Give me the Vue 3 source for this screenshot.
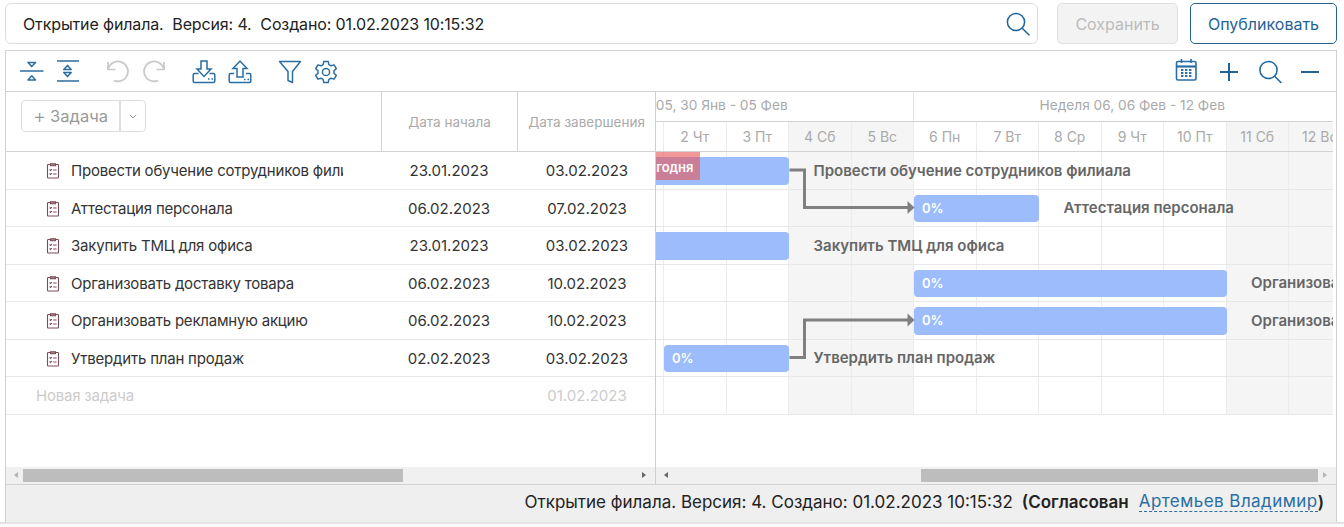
<script setup>
const DAY = 62.5
const tasks = [
  { name: 'Провести обучение сотрудников филиала', start: '23.01.2023', end: '03.02.2023', from: -6, to: 5, pct: '' },
  { name: 'Аттестация персонала', start: '06.02.2023', end: '07.02.2023', from: 7, to: 9, pct: '0%' },
  { name: 'Закупить ТМЦ для офиса', start: '23.01.2023', end: '03.02.2023', from: -6, to: 5, pct: '' },
  { name: 'Организовать доставку товара', start: '06.02.2023', end: '10.02.2023', from: 7, to: 12, pct: '0%' },
  { name: 'Организовать рекламную акцию', start: '06.02.2023', end: '10.02.2023', from: 7, to: 12, pct: '0%' },
  { name: 'Утвердить план продаж', start: '02.02.2023', end: '03.02.2023', from: 3, to: 5, pct: '0%' }
]
const days = [
  ['30 Пн', 0], ['31 Вт', 0], ['1 Ср', 0], ['2 Чт', 0], ['3 Пт', 0], ['4 Сб', 1], ['5 Вс', 1],
  ['6 Пн', 0], ['7 Вт', 0], ['8 Ср', 0], ['9 Чт', 0], ['10 Пт', 0], ['11 Сб', 1], ['12 Вс', 1]
].map(([label, off]) => ({ label, off }))
const weeks = ['Неделя 05, 30 Янв - 05 Фев', 'Неделя 06, 06 Фев - 12 Фев']
const barStyle = t => ({ left: t.from * DAY + 'px', width: (t.to - t.from) * DAY + 'px' })
const labelStyle = t => ({ left: t.to * DAY + 24.5 + 'px' })
</script>

<template>
  <div class="page">
    <div class="top">
      <div class="title-box">
        <span class="title-text">Открытие филала.&nbsp; Версия: 4.&nbsp; Создано: 01.02.2023 10:15:32</span>
        <svg class="top-search" width="24" height="24" viewBox="0 0 24 24" fill="none" stroke="#1f6399" stroke-width="1.5"><circle cx="10" cy="10" r="8.6"/><path d="M16.2 16.2 23.4 23.2"/></svg>
      </div>
      <button class="btn btn-off">Сохранить</button>
      <button class="btn btn-main">Опубликовать</button>
    </div>

    <div class="panel">
      <div class="toolbar">
        <div class="tools">
          <div class="group">
            <svg class="ico" viewBox="0 0 24 24" fill="none" stroke="#2a6ea3" stroke-width="1.5" stroke-linejoin="round"><path d="M0 11H23.5"/><path d="M8 2.4H15.5L11.75 6.6Z"/><path d="M8 20H15.5L11.75 15.8Z"/></svg>
            <svg class="ico" viewBox="0 0 24 24" fill="none" stroke="#2a6ea3" stroke-width="1.5" stroke-linejoin="round"><path d="M1 1H23M1 21H23"/><path d="M7.8 9.6H15.2L11.5 5.4Z"/><path d="M7.8 12.4H15.2L11.5 16.6Z"/></svg>
          </div>
          <div class="group">
            <svg class="ico" viewBox="0 0 24 24" fill="none" stroke="#c9c9c9" stroke-width="1.7"><path d="M2 2V9.5H9.5"/><path d="M2.2 9.2A10 10 0 1 1 8 20.6"/></svg>
            <svg class="ico" viewBox="0 0 24 24" fill="none" stroke="#c9c9c9" stroke-width="1.7"><path d="M22 2V9.5H14.5"/><path d="M21.8 9.2A10 10 0 1 0 16 20.6"/></svg>
          </div>
          <div class="group">
            <svg class="ico" viewBox="0 0 24 24" fill="none" stroke="#2a6ea3" stroke-width="1.5"><path d="M9 1H15V9H19L12 16.5 5 9H9Z"/><path d="M6.5 13.5H2.5Q1.2 13.5 1.2 15V21Q1.2 22.5 2.5 22.5H21.5Q22.8 22.5 22.8 21V15Q22.8 13.5 21.5 13.5H17.5"/><path d="M16 19H17.5M19.5 19H21" stroke-width="1.6"/></svg>
            <svg class="ico" viewBox="0 0 24 24" fill="none" stroke="#2a6ea3" stroke-width="1.5"><path d="M9 17H15V8.5H19L12 1 5 8.5H9Z"/><path d="M6 13.5H2.5Q1.2 13.5 1.2 15V21Q1.2 22.5 2.5 22.5H21.5Q22.8 22.5 22.8 21V15Q22.8 13.5 21.5 13.5H18"/><path d="M16 19.5H17.5M19.5 19.5H21" stroke-width="1.6"/></svg>
          </div>
          <div class="group">
            <svg class="ico" viewBox="0 0 24 24" fill="none" stroke="#2a6ea3" stroke-width="1.5"><path d="M1.5 1.5H22.5L14.5 11.5V22.5L10 20.5V11.5Z" stroke-linejoin="round"/></svg>
            <svg class="ico" viewBox="0 0 24 24" fill="none" stroke="#2a6ea3" stroke-width="1.5" stroke-linejoin="round"><circle cx="12" cy="12" r="3.6"/><path d="M9.8 1.5H14.2L14.9 4.6 17 5.8 20.1 4.9 22.3 8.6 20 10.8V13.2L22.3 15.4 20.1 19.1 17 18.2 14.9 19.4 14.2 22.5H9.8L9.1 19.4 7 18.2 3.9 19.1 1.7 15.4 4 13.2V10.8L1.7 8.6 3.9 4.9 7 5.8 9.1 4.6Z"/></svg>
          </div>
        </div>
        <div class="tools-right">
          <svg class="ico cal" viewBox="0 0 24 24" fill="none" stroke="#2a6ea3" stroke-width="1.6"><g transform="translate(0 -2)"><rect x="2.5" y="3.5" width="19.5" height="18.5" rx="1.5"/><path d="M2.5 8.5H22" stroke-width="2.2"/><path d="M7.5 1V5M17 1V5"/><path d="M7 12H9.4M11 12H13.4M15 12H17.4M7 15H9.4M11 15H13.4M15 15H17.4M7 18H9.4M11 18H13.4M15 18H17.4" stroke-width="1.8"/></g></svg>
          <svg class="ico" viewBox="0 0 24 24" fill="none" stroke="#1f6399" stroke-width="2"><path d="M12 3V21M3 12H21"/></svg>
          <svg class="ico" viewBox="0 0 24 24" fill="none" stroke="#1f6399" stroke-width="1.5"><circle cx="10.5" cy="10" r="8.6"/><path d="M16.7 16.2 23.4 23"/></svg>
          <svg class="ico" viewBox="0 0 24 24" fill="none" stroke="#1f6399" stroke-width="2"><path d="M3 12H21"/></svg>
        </div>
      </div>

      <div class="grid-area">
        <div class="left">
          <div class="l-head">
            <div class="c-name head-name">
              <div class="split">
                <span class="split-main"><span class="plus">+</span> Задача</span>
                <span class="split-caret"><svg width="8" height="5" viewBox="0 0 8 5" fill="none" stroke="#999" stroke-width="1"><path d="M.8.8 4 4 7.2.8"/></svg></span>
              </div>
            </div>
            <div class="c-date h-date bl">Дата начала</div>
            <div class="c-end h-date bl">Дата завершения</div>
          </div>
          <div v-for="t in tasks" :key="t.name" class="l-row">
            <div class="c-name task">
              <svg class="clip" width="14" height="17" viewBox="0 0 14 17" fill="none" stroke="#7c4a5c" stroke-width="1.1"><rect x="1.5" y="2.5" width="11" height="13.5" rx=".8"/><path d="M4.5 3.8V1.8H9.5V3.8Z" fill="#a88a6a"/><path d="M3.6 7.5 4.6 8.5 5.8 7M3.6 11.5 4.6 12.5 5.8 11M7.2 8H10.6M7.2 12H10.6"/></svg>
              <span class="task-name">{{ t.name }}</span>
            </div>
            <div class="c-date">{{ t.start }}</div>
            <div class="c-end">{{ t.end }}</div>
          </div>
          <div class="l-row muted">
            <div class="c-name new-task">Новая задача</div>
            <div class="c-date"></div>
            <div class="c-end">01.02.2023</div>
          </div>
          <div class="spacer"></div>
          <div class="scroll">
            <i class="tri tri-l"></i>
            <span class="thumb thumb-l"></span>
            <i class="tri tri-r push"></i>
          </div>
        </div>

        <div class="right">
          <div class="chart">
            <div class="track">
              <div class="weeks">
                <div v-for="w in weeks" :key="w" class="week">{{ w }}</div>
              </div>
              <div class="days">
                <div v-for="d in days" :key="d.label" class="day" :class="{ off: d.off }">{{ d.label }}</div>
              </div>
              <div class="body">
                <div class="cols">
                  <div v-for="d in days" :key="d.label" class="col" :class="{ off: d.off }"></div>
                </div>
                <div v-for="t in tasks" :key="t.name" class="g-row">
                  <div class="bar" :style="barStyle(t)">{{ t.pct }}</div>
                  <div class="bar-label" :style="labelStyle(t)">{{ t.name }}</div>
                </div>
                <div class="g-row"></div>
                <svg class="links" width="875" height="263" fill="none">
                  <path d="M312.5 18H327.5V55.5H432" stroke="#808080" stroke-width="3"/>
                  <path d="M437.5 55.5 430.5 49V62Z" fill="#808080"/>
                  <path d="M312.5 205.5H327.5V168H432" stroke="#808080" stroke-width="3"/>
                  <path d="M437.5 168 430.5 161.5V174.5Z" fill="#808080"/>
                </svg>
                <div class="today">сегодня</div>
              </div>
            </div>
          </div>
          <div class="spacer white"></div>
          <div class="scroll">
            <i class="tri tri-l dark"></i>
            <span class="thumb thumb-r"></span>
            <i class="tri tri-r push"></i>
          </div>
        </div>
      </div>

      <div class="footer">
        <span>Открытие филала. Версия: 4. Создано: 01.02.2023 10:15:32</span>
        <b class="status">(Согласован</b>
        <a class="user">Артемьев Владимир</a><b>)</b>
      </div>
    </div>
    <div class="baseline"></div>
  </div>
</template>

<style scoped>
.page { width: 1344px; height: 527px; overflow: hidden; box-sizing: border-box; padding-top: 3px; font-family: Inter, "Noto Sans", sans-serif; background: #fff; color: #333; }
.top { display: flex; height: 41px; padding: 0 7px 0 5px; }
.title-box { width: 1033px; box-sizing: border-box; border: 1px solid #ddd; border-radius: 6px; display: flex; align-items: center; justify-content: space-between; padding: 0 7px 0 17px; }
.title-text { font-size: 16px; letter-spacing: -.13px; color: #222; }
.top-search { margin-top: 1px; }
.btn { height: 41px; box-sizing: border-box; border-radius: 5px; font: 16px Inter, sans-serif; padding: 0; }
.btn-off { width: 121px; margin-left: 19px; background: #f3f3f3; border: 1px solid #e0e0e0; color: #bbb; }
.btn-main { width: 147px; margin-left: 12px; background: #fff; border: 1px solid #1f6399; color: #1f6399; }
.panel { margin: 6px 7px 0 5px; border: 1px solid #d2d2d2; border-bottom: 0; }
.toolbar { height: 41px; box-sizing: border-box; border-bottom: 1px solid #d2d2d2; display: flex; justify-content: space-between; align-items: center; padding: 0 14px; }
.tools { display: flex; gap: 26px; margin-top: 2px; }
.group { display: flex; gap: 12px; }
.tools-right { display: flex; gap: 16.5px; margin-top: 2px; }
.cal { margin-right: 2.5px; }
.ico { width: 24px; height: 24px; display: block; overflow: visible; }
.grid-area { display: flex; height: 392px; border-bottom: 1px solid #d2d2d2; }
.left { width: 650px; box-sizing: border-box; border-right: 1px solid #cfcfcf; display: flex; flex-direction: column; }
.l-head { display: flex; height: 60px; flex: none; box-sizing: border-box; border-bottom: 1px solid #d2d2d2; }
.c-name { width: 375px; min-width: 0; box-sizing: border-box; }
.c-date { width: 136px; text-align: center; }
.c-end { width: 138px; text-align: center; box-sizing: border-box; }
.l-row .c-end { padding-left: 2px; }
.bl { border-left: 1px solid #d2d2d2; box-sizing: border-box; }
.h-date { font-size: 13.5px; color: #aaa; display: flex; align-items: center; justify-content: center; white-space: nowrap; padding-top: 1px; }
.head-name { padding: 8px 0 0 15px; }
.split { display: flex; width: 125px; height: 32px; box-sizing: border-box; border: 1px solid #ddd; border-radius: 4px; font-size: 16.5px; color: #999; }
.split-main { width: 97px; border-right: 2px solid #ddd; display: flex; align-items: center; justify-content: center; gap: 4px; }
.plus { font-size: 20px; font-weight: 300; line-height: 1; }
.split-caret { flex: 1; display: flex; align-items: center; justify-content: center; }
.l-row { height: 37.5px; box-sizing: border-box; border-bottom: 1px solid #e8e8e8; padding-top: .5px; display: flex; align-items: center; font-size: 15px; color: #333; flex: none; }
.task { display: flex; align-items: center; padding-left: 40px; padding-right: 38px; white-space: nowrap; }
.clip { flex: none; margin-right: 11px; }
.task-name { overflow: hidden; letter-spacing: -.2px; }
.muted { color: #ccc; }
.new-task { padding-left: 30px; letter-spacing: -.2px; }
.spacer { flex: 1; }
.white { background: #fff; }
.scroll { height: 16px; flex: none; background: #f0f0f0; display: flex; align-items: center; padding: 0 9px 1px 8px; }
.tri { width: 0; height: 0; border-top: 3.5px solid transparent; border-bottom: 3.5px solid transparent; flex: none; }
.tri-l { border-right: 4px solid #b5b5b5; }
.tri-l.dark { border-right-color: #666; }
.tri-r { border-left: 4px solid #666; }
.right .tri-r { border-left-color: #b5b5b5; }
.push { margin-left: auto; }
.thumb { height: 13px; background: #bdbdbd; display: block; flex: none; }
.thumb-l { width: 380px; margin-left: 5px; }
.thumb-r { width: 397px; margin-left: 253px; }
.right { width: 680px; display: flex; flex-direction: column; min-width: 0; }
.chart { width: 677px; height: 323px; overflow: hidden; flex: none; }
.track { width: 875px; margin-left: -179.5px; }
.weeks { display: flex; height: 30px; box-sizing: border-box; border-bottom: 1px solid #d2d2d2; }
.week { width: 437.5px; box-sizing: border-box; border-right: 1px solid #e2e2e2; text-align: center; font-size: 13.7px; color: #aaa; line-height: 27px; white-space: nowrap; }
.days { display: flex; height: 30px; box-sizing: border-box; border-bottom: 1px solid #d2d2d2; }
.day { width: 62.5px; flex: none; box-sizing: border-box; border-right: 1px solid #ececec; text-align: center; font-size: 14px; color: #aaa; line-height: 29px; white-space: nowrap; }
.day.off, .col.off { background: #f5f5f5; }
.body { position: relative; height: 262.5px; }
.cols { position: absolute; inset: 0; display: flex; }
.col { width: 62.5px; flex: none; box-sizing: border-box; border-right: 1px solid #ececec; }
.g-row { position: relative; height: 37.5px; box-sizing: border-box; border-bottom: 1px solid #e8e8e8; }
.bar { position: absolute; top: 5px; height: 27.5px; background: #9cbcfc; border-radius: 4px; color: #fff; font-size: 13px; font-weight: 600; line-height: 27px; padding-left: 8px; box-sizing: border-box; }
.bar-label { position: absolute; top: .5px; line-height: 36px; font-size: 15px; font-weight: 600; color: #666; white-space: nowrap; }
.links { position: absolute; left: 0; top: 0; }
.today { position: absolute; right: 652px; top: 0; width: 60px; height: 28px; background: rgba(232, 88, 88, .62); color: #fff; font-size: 13px; font-weight: 600; line-height: 30px; text-align: right; padding-right: 6px; box-sizing: border-box; white-space: nowrap; }
.footer { height: 37px; box-sizing: border-box; background: #efefef; display: flex; align-items: center; justify-content: flex-end; padding: 0 12px 4px 0; font-size: 17px; color: #222; white-space: nowrap; }
.status { margin: 0 10px 0 9px; font-weight: 600; }
.footer b { font-weight: 600; }
.user { color: #2a6ea3; border-bottom: 1px dashed #2a6ea3; line-height: 19px; letter-spacing: .45px; }
.baseline { height: 2px; background: #e2e2e2; }
</style>
